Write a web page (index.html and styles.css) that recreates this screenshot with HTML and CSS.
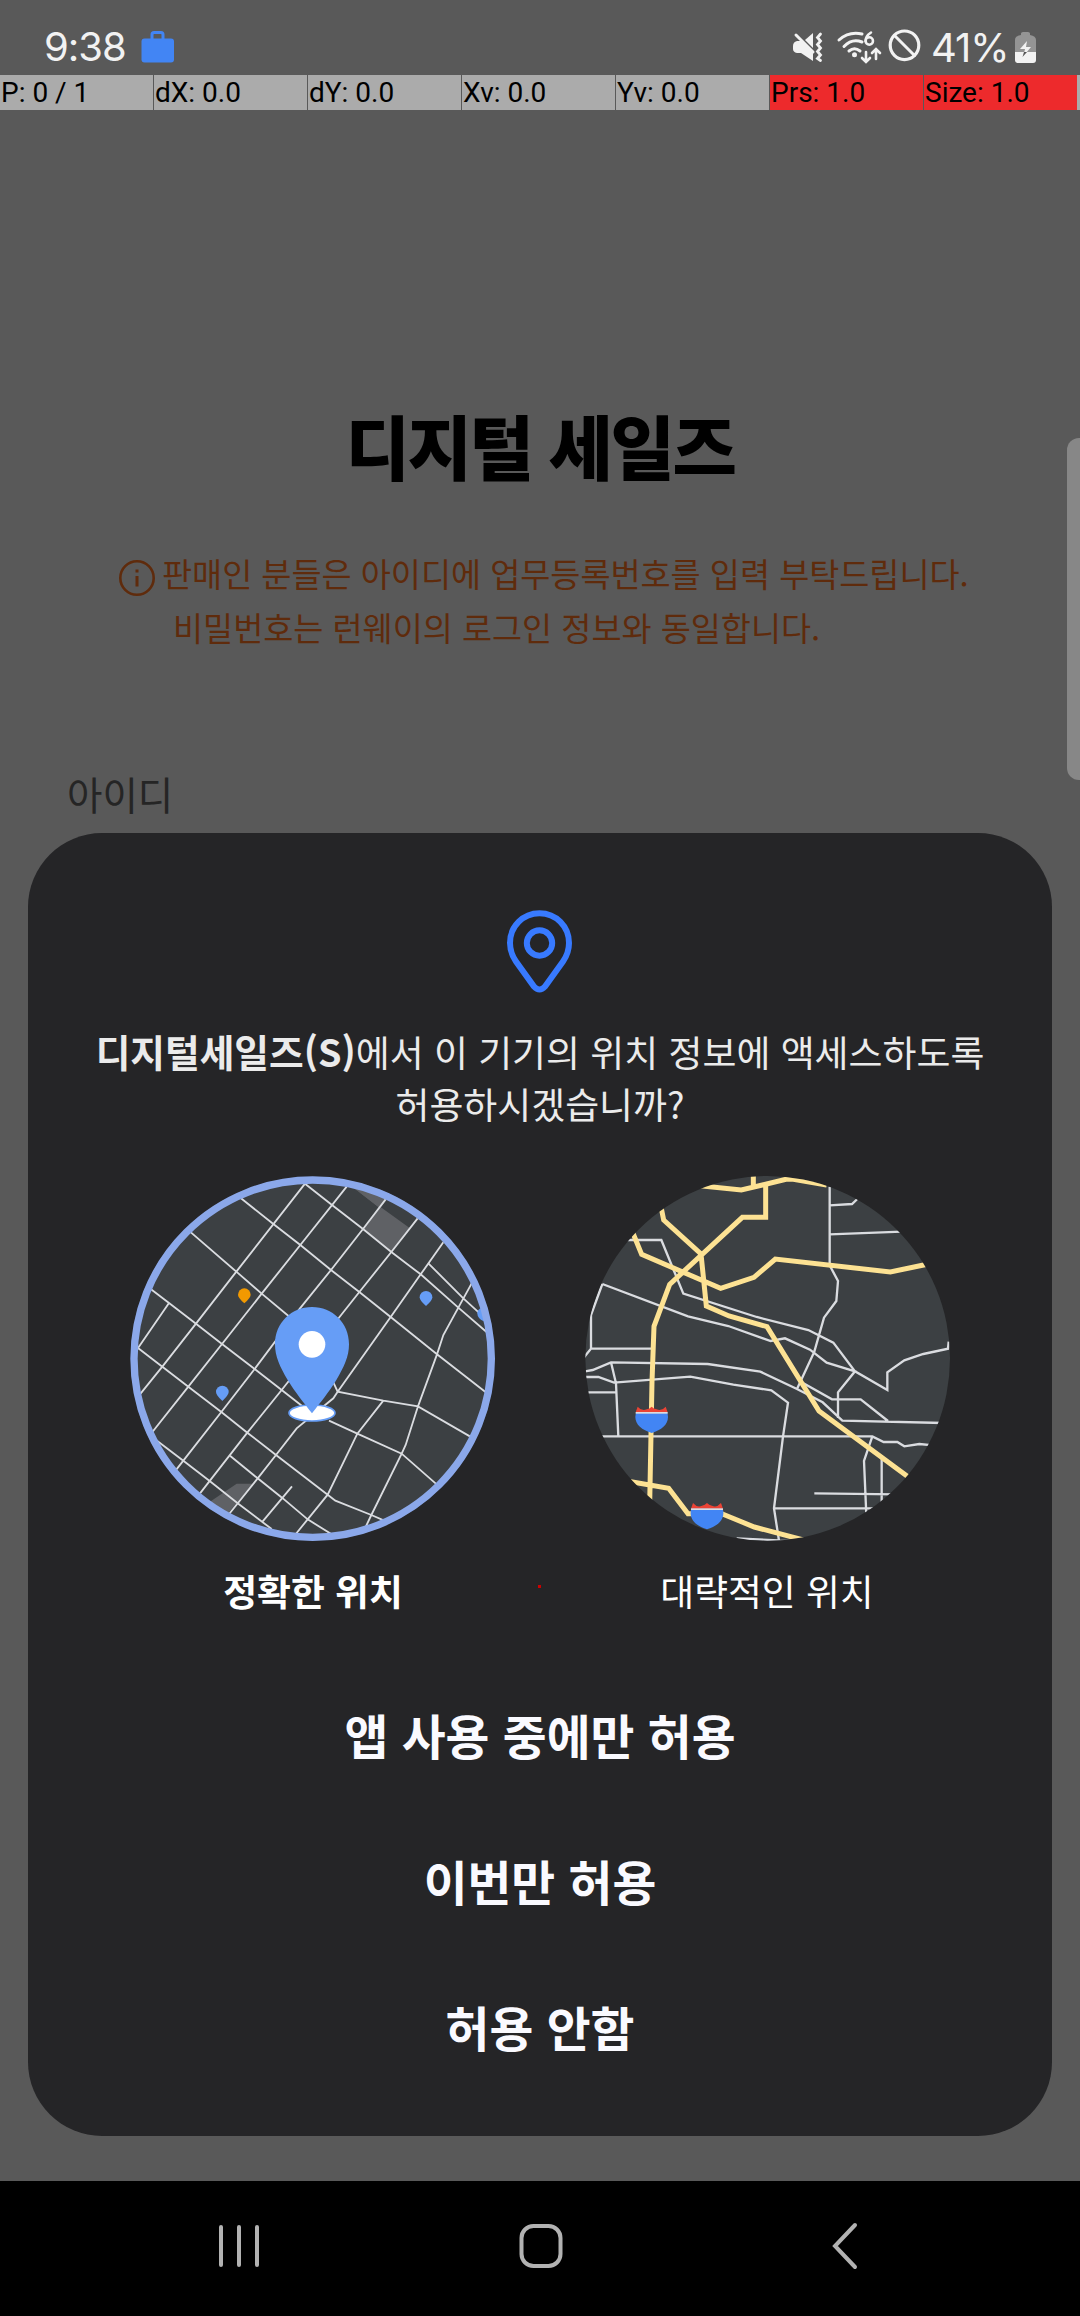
FILE: index.html
```
<!DOCTYPE html>
<html lang="ko">
<head>
<meta charset="utf-8">
<title>디지털 세일즈</title>
<link rel="stylesheet" href="styles.css">
</head>
<body>
<div class="phone">
  <header class="status">
    <span class="clock">9:38</span>
    <svg class="work" width="34" height="34" viewBox="0 0 34 34"><path d="M11 8V3.5Q11 1.5 13 1.5H20Q22 1.5 22 3.5V8" fill="none" stroke="#4285f4" stroke-width="3"/><rect x="0.5" y="7.500" width="32.500" height="24" rx="3" fill="#4285f4"/></svg>
    <span class="spring"></span>
    <svg class="icons" width="130" height="40" viewBox="790 26 130 40">
      <g fill="#f2f2f2">
        <path d="M792 46Q792 42 796 41L801 41L812 51V61L800 53H796Q792 52 792 49Z"/>
        <path d="M812 33V48L804 40Z"/>
        <circle cx="853.500" cy="54.700" r="2.500"/>
      </g>
      <g fill="none" stroke="#f2f2f2" stroke-width="3" stroke-linecap="round">
        <path d="M795 35L812 52"/>
        <path d="M819.500 34L816.500 37.500L819.500 41L816.500 44.500L819.500 48L816.500 51.500L819.500 55L816.500 58.500L819.500 60.500" stroke-width="2.800"/>
        <path d="M838 40Q848 31 861 34M843 46.500Q851 38 861 42M848 51Q853.500 46.500 859 51"/>
        <circle cx="868.300" cy="41" r="3.700" stroke-width="2.500"/><path d="M870 32.500Q864.500 36 864.500 41" stroke-width="2.500"/>
        <path d="M865 52V61M861 58L865 62L869 58M875 59V50M871 53L875 49L879 53" stroke-width="2.600"/>
        <circle cx="903.500" cy="45.300" r="14.300" stroke-width="3.200"/><path d="M893.500 35.500L913.500 55.500"/>
      </g>
    </svg>
    <span class="percent">41%</span>
    <svg class="battery" width="22" height="34" viewBox="0 0 22 34"><path d="M6 4V2.500Q6 1 8 1H13Q15 1 15 2.500V4Q21 5 21 9V21H0V9Q0 5 6 4Z" fill="#949494"/><path d="M0 21H21V29Q21 32 18 32H3Q0 32 0 29Z" fill="#f2f2f2"/><path d="M12 10L5 18H10L8.500 25L16 16H11Z" fill="#f2f2f2"/><path d="M9 21H12L7.500 26Z" fill="#555"/></svg>
  </header>
  <div class="debug">
    <span>P: 0 / 1</span><span>dX: 0.0</span><span>dY: 0.0</span><span>Xv: 0.0</span><span>Yv: 0.0</span><span class="hot">Prs: 1.0</span><span class="hot">Size: 1.0</span><i></i>
  </div>
  <main class="login">
    <h1>디지털 세일즈</h1>
    <div class="notice">
      <svg width="38" height="38" viewBox="0 0 38 38" fill="none" stroke="#5f2b0c" stroke-width="2.600"><circle cx="19" cy="19" r="16.700"/><path d="M19 17V27.500" stroke-width="3"/><path d="M19 10.500V13.500" stroke-width="3"/></svg>
      <p class="first">판매인 분들은 아이디에 업무등록번호를 입력 부탁드립니다.</p>
      <p class="second">비밀번호는 런웨이의 로그인 정보와 동일합니다.</p>
    </div>
    <label>아이디</label>
  </main>
  <section class="dialog">
    <svg class="pin" width="68" height="86" viewBox="0 0 68 86" fill="none" stroke="#387aff" stroke-width="6"><path d="M33.500 3.300C17 3.300 4 16.500 4 33C4 41 6.500 46.500 10 51.500L28 76.500Q33.500 82.500 39 76.500L57 51.500C60.500 46.500 63 41 63 33C63 16.500 50 3.300 33.500 3.300Z"/><circle cx="33.500" cy="33" r="12.700"/></svg>
    <p class="question"><b>디지털세일즈(S)</b><span>에서 이 기기의 위치 정보에 액세스하도록</span></p>
    <p class="question second-line"><span>허용하시겠습니까?</span></p>
    <div class="choices">
      <div class="choice">
        <svg width="366" height="366" viewBox="30 33 1098 1098">
          <defs><clipPath id="fine"><circle cx="578" cy="581" r="540"/></clipPath></defs>
          <circle cx="578" cy="581" r="546" fill="#3c4043"/>
          <g clip-path="url(#fine)">
            <path d="M690 60L870 190L815 260L730 192L780 130ZM270 1010L350 956H398L320 1050Z" fill="#5f6165"/>
            <path d="M690 60L780 130L810 90Z" fill="#5f6165"/>
            <g fill="none" stroke="#dadce0" stroke-width="5.500">
              <path d="M555 56L349 320L228 476L127 605L50 700M680 65L541 240L425 386L306 537L205 665L90 810M797 103L729 192L633 315L540 430L404 612L304 741L190 887L160 925M893 160L814 261L718 381L485 675L382 803L240 985M970 232L902 328L812 456L653 680L640 700L530 790L468 870L413 940L325 1050"/>
              <path d="M555 56L636 120L729 192L814 261L902 328L1015 428L1110 510M925 295L1030 400L1090 455M363 100L460 177L541 240L633 315L718 381L812 456L951 568L1105 688M210 200L349 320L425 386L520 465M93 373L147 414L228 476L306 537L404 612L485 675L555 730M147 414L50 555M53 548L127 605L205 665L304 741L382 803L468 870L623 989L646 1007L754 1050L800 1070M330 872L413 940L486 998L563 1063L635 1108M105 823L190 887L268 947L353 1015L455 1092M516 964L425 1073M627 767L712 806L845 866L950 958M640 652L653 680L790 707L894 724L1060 820M790 707L712 806L623 989L525 1110M1055 355L1015 428L970 510L951 568L894 724L857 840L845 866L754 1050L735 1090"/>
            </g>
            <path d="M1109 423C1092 423 1072 429 1072 445Q1072 460 1091 469Z" fill="#669df6"/>
          </g>
          <circle cx="578" cy="581" r="536" fill="none" stroke="#8ba8ea" stroke-width="22"/>
          <path d="M373 370A19 19 0 0 0 354 389Q354 398 373 415Q392 398 392 389A19 19 0 0 0 373 370Z" fill="#f29900"/>
          <g fill="#669df6"><path d="M918 378A19 19 0 0 0 899 397Q899 407 918 423Q937 407 937 397A19 19 0 0 0 918 378Z"/><path d="M307 662A19 19 0 0 0 288 681Q288 690 307 708Q326 690 326 681A19 19 0 0 0 307 662Z"/></g>
          <ellipse cx="576" cy="744" rx="69" ry="24" fill="#fff" stroke="#669df6" stroke-width="5"/>
          <path d="M576 426C515 426 465 473 465 538C465 575 480 606 503 645C526 683 550 711 576 745C602 711 626 683 649 645C672 606 687 575 687 538C687 473 637 426 576 426Z" fill="#669df6"/>
          <circle cx="576" cy="538" r="40" fill="#fff"/>
        </svg>
        <b>정확한 위치</b>
      </div>
      <i class="touch"></i>
      <div class="choice">
        <svg width="366" height="366" viewBox="42 33 1098 1098">
          <defs><clipPath id="coarse"><circle cx="593" cy="580" r="547"/></clipPath>
          <g id="shield"><path d="M3 16Q0 22 0 31C0 54 20 70 49 79C78 70 98 54 98 31Q98 22 95 16Z" fill="#4285f4"/><path d="M7 0Q20 15 34 8Q43 6 49 0Q55 6 64 8Q78 15 91 0L97 17H1Z" fill="#ea4335"/><rect x="1" y="16" width="96" height="5" fill="#dadce0"/></g></defs>
          <circle cx="593" cy="580" r="547" fill="#3c4043"/>
          <g clip-path="url(#coarse)">
            <g fill="none" stroke="#dadce0" stroke-width="7">
              <path d="M779 65V301L804 348L799 408L762 458L733 560L681 672M779 121L846 117L862 102M779 208L995 200M160 225H274L340 386L560 456L715 495L790 533L855 619L952 675V622L1003 586L1060 567L1134 551L1136 530M97 357L354 454L475 483L602 528L645 520L720 554L770 593L855 619L804 682V759M97 357L63 450V551L40 580M63 551H248M40 620L68 615L123 592L413 597L571 620L681 672L758 712L817 767L1120 774M40 636H85L132 653L361 635L490 659L604 676L654 713L639 815L612 1030L629 1140M40 682H137M123 592L138 655L145 814M90 814H907L941 831H982L1003 844L1048 837L1090 841M907 814L882 888L889 1050M935 882V1020M733 985L980 988M612 1030H930M695 652L786 703H872L954 768M500 1120L660 1128"/>
            </g>
            <g fill="none" stroke="#fde293" stroke-width="15">
              <path d="M390 62L514 75L648 43H670L770 60M550 20V66M587 55V157H517L299 358L252 484L246 650L239 1020M270 110L281 165L393 267L409 423L477 453L591 485L747 738L1020 940M185 195L215 268L452 370L552 337L616 282L961 321L1080 296M170 948L296 970L354 1046H377M450 1044L553 1086L700 1125"/>
            </g>
          </g>
          <use href="#shield" x="196" y="725"/><use href="#shield" x="362" y="1014"/>
        </svg>
        <span class="coarse-label">대략적인 위치</span>
      </div>
    </div>
    <div class="actions"><button>앱 사용 중에만 허용</button><button>이번만 허용</button><button>허용 안함</button></div>
  </section>
  <nav class="navbar">
    <svg width="1080" height="135" viewBox="0 0 1080 135" fill="none" stroke="#b2b2b2" stroke-width="4" stroke-linecap="round"><path d="M221 46V84M239 46V84M257 46V84"/><rect x="521.500" y="45" width="39" height="40" rx="12"/><path d="M855 44L835 65L855 86"/></svg>
  </nav>
  <div class="thumb"></div>
</div>
</body>
</html>
```
FILE: styles.css
```
* { box-sizing: border-box; }
body { margin: 0; background: #595959; }
p, h1 { margin: 0; white-space: nowrap; }
.phone { position: relative; width: 1080px; height: 2316px; overflow: hidden; display: flex; flex-direction: column; background: #595959; font-family: "Noto Sans CJK KR", sans-serif; }
svg { display: block; flex: none; }

.status { flex: none; height: 75px; display: flex; align-items: flex-start; padding: 0 43px 0 44px; font-family: Inter, sans-serif; color: #f2f2f2; }
.clock { width: 97px; padding-top: 23px; font-size: 40px; line-height: 48px; letter-spacing: -1px; white-space: nowrap; }
.work { margin-top: 31px; }
.spring { flex: 1; }
.icons { margin: 26px 10px 0 0; }
.percent { width: 84px; padding-top: 24px; font-size: 40px; line-height: 48px; letter-spacing: -1px; white-space: nowrap; }
.battery { margin-top: 31px; }

.debug { flex: none; display: flex; height: 35px; gap: 1px; font: 28px/36px Roboto, sans-serif; color: #000; }
.debug span { width: 153px; padding-left: 1px; background: #ababab; white-space: nowrap; }
.debug .hot { background: #ed2a2c; }
.debug i { flex: 1; margin-left: -1px; background: #ababab; }

.login { flex: none; height: 723px; display: flex; flex-direction: column; }
h1 { margin-top: 283px; text-align: center; font-size: 70px; line-height: 104px; font-weight: 900; letter-spacing: -2.400px; color: #000; }
.notice { display: grid; grid-template-columns: 38px auto; margin: 49px 0 0 118px; column-gap: 6px; font-size: 32.700px; line-height: 54px; color: #5f2b0c; }
.notice svg { margin-top: 13px; }
.notice .second { grid-column: 1 / 3; padding-left: 55px; }
label { margin: 111px 0 0 67px; font-size: 38.500px; line-height: 56px; color: #252525; }

.dialog { flex: none; width: 1024px; height: 1303px; margin: 0 28px; padding-top: 77px; display: flex; flex-direction: column; align-items: center; background: #252527; border-radius: 74px; color: #fff; }
.question { height: 52px; margin-top: 29px; font-size: 36.900px; line-height: 52px; color: #ebebeb; }
.question b { font-size: 37.700px; }
.second-line { margin-top: 0; }
.choices { display: flex; align-items: flex-start; justify-content: space-between; width: 820px; margin-top: 47px; }
.choice { width: 366px; display: flex; flex-direction: column; align-items: center; font-size: 36.800px; line-height: 52px; white-space: nowrap; gap: 22px; }
.touch { width: 3px; height: 3px; margin: 409px 2px 0 0; background: #c00; }
.actions { display: flex; flex-direction: column; align-items: center; margin-top: 46px; }
button { height: 146px; padding: 0; border: 0; background: none; font: bold 47.700px/70px "Noto Sans CJK KR", sans-serif; color: #fafaff; white-space: nowrap; }

.navbar { margin-top: auto; height: 135px; background: #000; }
.thumb { position: absolute; left: 1067px; top: 438px; width: 26px; height: 342px; border-radius: 12px; background: #878787; }
```
